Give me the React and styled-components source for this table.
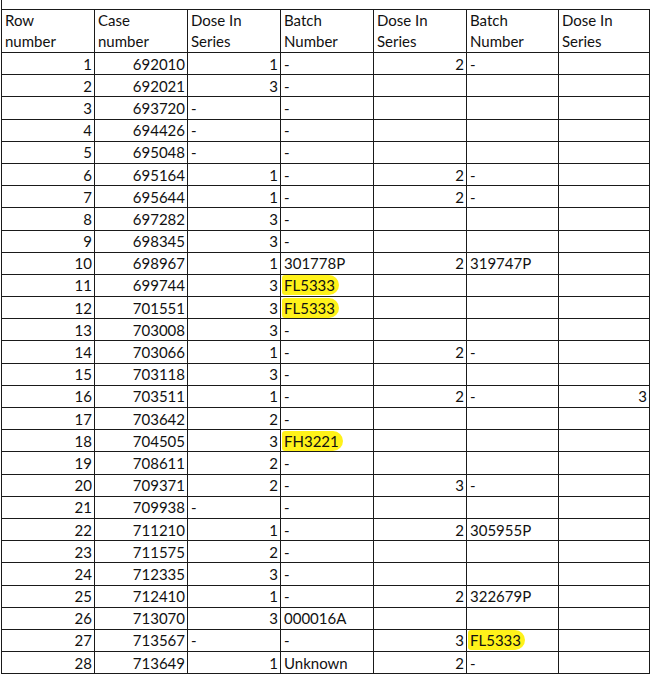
import React from 'react';
import styled, { createGlobalStyle } from 'styled-components';

const GlobalStyle = createGlobalStyle`
  html, body {
    margin: 0;
    padding: 0;
    background: #fff;
  }
  body {
    font-family: Lato, "Open Sans", sans-serif;
    color: #111;
  }
`;

const Page = styled.div`
  width: 648px;
  margin-left: 1px;
  padding-top: 9px;
  border-left: 1px solid #1a1a1a;
  overflow: hidden;
`;

const Sheet = styled.table`
  border-collapse: collapse;
  table-layout: fixed;
  width: 649px;
  margin-left: -1px;
  font-size: 15px;
`;

const Col = styled.col`
  width: ${(p) => p.$w}px;
`;

const HeadCell = styled.th`
  border: 1px solid #1a1a1a;
  text-align: left;
  vertical-align: top;
  font-weight: 400;
  line-height: 21px;
  padding: 0 2px 0 3px;
  height: 42px;
  white-space: pre-line;
`;

const Row = styled.tr`
  height: 22.2px;
`;

const Cell = styled.td`
  border: 1px solid #1a1a1a;
  padding: 0 ${(p) => (p.$right ? '2px' : '0')} 0 ${(p) => (p.$right ? '0' : '3px')};
  text-align: ${(p) => (p.$right ? 'right' : 'left')};
  line-height: 20px;
  white-space: nowrap;
  overflow: visible;
`;

const Marker = styled.span`
  display: inline-block;
  background: #fff21a;
  margin-left: -2px;
  padding: 0 4px 0 2px;
  line-height: 20px;
  border-radius: 3px 10px 10px 3px;
`;

const headers = [
  'Row\nnumber',
  'Case\nnumber',
  'Dose In\nSeries',
  'Batch\nNumber',
  'Dose In\nSeries',
  'Batch\nNumber',
  'Dose In\nSeries',
];

const widths = [93, 93, 93, 93, 93, 92, 91];

// [case, dose1, batch1, dose2, batch2, dose3]; '*' marks a highlighted batch
const rows = [
  ['692010', '1', '-', '2', '-', ''],
  ['692021', '3', '-', '', '', ''],
  ['693720', '-', '-', '', '', ''],
  ['694426', '-', '-', '', '', ''],
  ['695048', '-', '-', '', '', ''],
  ['695164', '1', '-', '2', '-', ''],
  ['695644', '1', '-', '2', '-', ''],
  ['697282', '3', '-', '', '', ''],
  ['698345', '3', '-', '', '', ''],
  ['698967', '1', '301778P', '2', '319747P', ''],
  ['699744', '3', '*FL5333', '', '', ''],
  ['701551', '3', '*FL5333', '', '', ''],
  ['703008', '3', '-', '', '', ''],
  ['703066', '1', '-', '2', '-', ''],
  ['703118', '3', '-', '', '', ''],
  ['703511', '1', '-', '2', '-', '3'],
  ['703642', '2', '-', '', '', ''],
  ['704505', '3', '*FH3221', '', '', ''],
  ['708611', '2', '-', '', '', ''],
  ['709371', '2', '-', '3', '-', ''],
  ['709938', '-', '-', '', '', ''],
  ['711210', '1', '-', '2', '305955P', ''],
  ['711575', '2', '-', '', '', ''],
  ['712335', '3', '-', '', '', ''],
  ['712410', '1', '-', '2', '322679P', ''],
  ['713070', '3', '000016A', '', '', ''],
  ['713567', '-', '-', '3', '*FL5333', ''],
  ['713649', '1', 'Unknown', '2', '-', ''],
];

const isNumber = (v) => /^\d+$/.test(v);

function Value({ v }) {
  if (v.startsWith('*')) return <Marker>{v.slice(1)}</Marker>;
  return v;
}

export default function App() {
  return (
    <>
      <GlobalStyle />
      <Page>
        <Sheet>
          <colgroup>
            {widths.map((w, i) => (
              <Col key={i} $w={w} />
            ))}
          </colgroup>
          <thead>
            <tr>
              {headers.map((h, i) => (
                <HeadCell key={i}>{h}</HeadCell>
              ))}
            </tr>
          </thead>
          <tbody>
            {rows.map((r, i) => {
              const cells = [String(i + 1), ...r];
              return (
                <Row key={i}>
                  {cells.map((v, j) => (
                    <Cell key={j} $right={isNumber(v)}>
                      <Value v={v} />
                    </Cell>
                  ))}
                </Row>
              );
            })}
          </tbody>
        </Sheet>
      </Page>
    </>
  );
}
